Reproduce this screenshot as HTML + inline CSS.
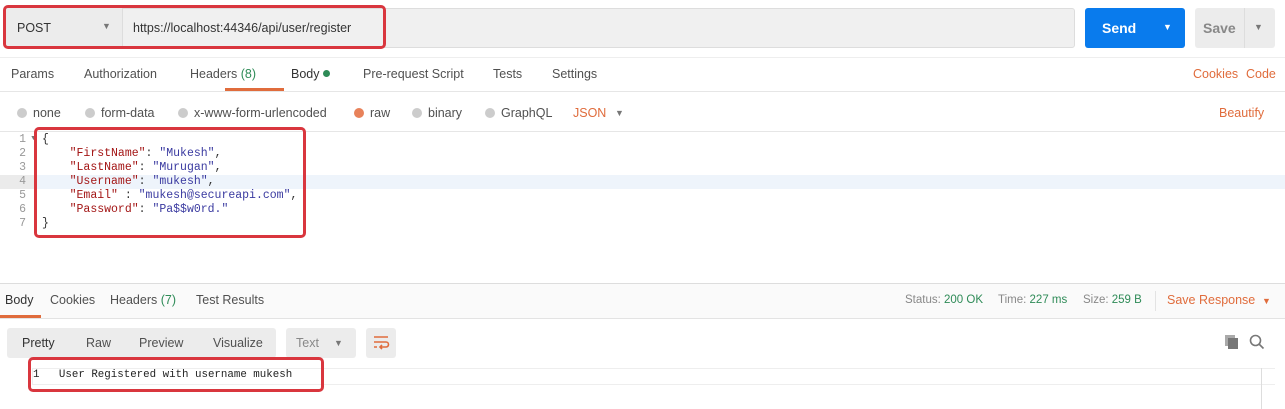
<!DOCTYPE html>
<html><head><style>
body{margin:0;width:1285px;height:409px;background:#fff;font-family:"Liberation Sans",sans-serif;font-size:12px;color:#505050;position:relative;overflow:hidden}
.a{position:absolute;white-space:nowrap}
.red{position:absolute;border:3px solid #d9363e;border-radius:5px;box-sizing:border-box}
.mono{font-family:"Liberation Mono",monospace;font-size:11.5px}
.k{color:#a31515}.s{color:#3a3aa0}
.dot{display:inline-block;width:10px;height:10px;border-radius:50%;background:#ccc;vertical-align:-1px;margin-right:6px}
.g{color:#2e8b57}.o{color:#e06c3c}
</style></head><body>
<div class="a" style="left:4px;top:8px;width:118px;height:40px;background:#ececec;border-radius:3px 0 0 3px"></div>
<div class="a" style="left:17px;top:21px;font-size:12.5px;color:#333">POST</div>
<div class="a" style="left:102px;top:21px;font-size:9px;color:#777">▼</div>
<div class="a" style="left:122px;top:8px;width:953px;height:40px;background:#f0f0f0;border:1px solid #ddd;box-sizing:border-box;border-radius:0 3px 3px 0"></div>
<div class="a" style="left:133px;top:21px;font-size:12.5px;color:#333">https://localhost:44346/api/user/register</div>
<div class="red" style="left:3px;top:5px;width:383px;height:44px"></div>
<div class="a" style="left:1085px;top:8px;width:100px;height:40px;background:#097bed;border-radius:3px"></div>
<div class="a" style="left:1102px;top:20px;font-size:14px;font-weight:bold;color:#fff">Send</div>
<div class="a" style="left:1163px;top:22px;font-size:9px;color:#fff">▼</div>
<div class="a" style="left:1195px;top:8px;width:80px;height:40px;background:#ececec;border-radius:3px"></div>
<div class="a" style="left:1244px;top:8px;width:1px;height:40px;background:#ddd"></div>
<div class="a" style="left:1203px;top:20px;font-size:14px;font-weight:bold;color:#888">Save</div>
<div class="a" style="left:1254px;top:22px;font-size:9px;color:#777">▼</div>
<div class="a" style="left:0;top:57px;width:1285px;height:1px;background:#eee"></div>
<div class="a" style="top:67px;left:11px;font-size:12.5px">Params</div>
<div class="a" style="top:67px;left:84px;font-size:12.5px">Authorization</div>
<div class="a" style="top:67px;left:190px;font-size:12.5px">Headers <span class="g">(8)</span></div>
<div class="a" style="top:67px;left:291px;font-size:12.5px;color:#333">Body <span style="display:inline-block;width:7px;height:7px;border-radius:50%;background:#2e8b57;vertical-align:1px"></span></div>
<div class="a" style="top:67px;left:363px;font-size:12.5px">Pre-request Script</div>
<div class="a" style="top:67px;left:493px;font-size:12.5px">Tests</div>
<div class="a" style="top:67px;left:552px;font-size:12.5px">Settings</div>
<div class="a o" style="top:67px;left:1193px;font-size:12.5px">Cookies</div>
<div class="a o" style="top:67px;left:1246px;font-size:12.5px">Code</div>
<div class="a" style="left:225px;top:88px;width:59px;height:3px;background:#e06c3c"></div>
<div class="a" style="left:0;top:91px;width:1285px;height:1px;background:#e6e6e6"></div>
<div class="a" style="top:106px;left:17px;font-size:12.5px"><span class="dot"></span>none</div>
<div class="a" style="top:106px;left:85px;font-size:12.5px"><span class="dot"></span>form-data</div>
<div class="a" style="top:106px;left:178px;font-size:12.5px"><span class="dot"></span>x-www-form-urlencoded</div>
<div class="a" style="top:106px;left:354px;font-size:12.5px"><span class="dot" style="background:#e8825a"></span>raw</div>
<div class="a" style="top:106px;left:412px;font-size:12.5px"><span class="dot"></span>binary</div>
<div class="a" style="top:106px;left:485px;font-size:12.5px"><span class="dot"></span>GraphQL</div>
<div class="a o" style="top:106px;left:573px;font-size:12.5px">JSON</div>
<div class="a" style="top:108px;left:615px;font-size:9px;color:#777">▼</div>
<div class="a o" style="top:106px;left:1219px;font-size:12.5px">Beautify</div>
<div class="a" style="left:0;top:131px;width:1285px;height:1px;background:#e6e6e6"></div>
<div class="a" style="left:0;top:175px;width:1285px;height:14px;background:#ebebeb"></div>
<div class="a" style="left:34px;top:175px;width:1251px;height:14px;background:#eef4fb"></div>
<div class="a mono" style="left:14px;top:133px;line-height:14px;color:#999;text-align:right;width:12px">1<br>2<br>3<br>4<br>5<br>6<br>7</div>
<div class="a" style="left:30px;top:135px;font-size:7px;color:#777">▼</div>
<div class="a mono" style="left:42px;top:133px;line-height:14px;color:#333;white-space:pre">{
    <span class="k">"FirstName"</span>: <span class="s">"Mukesh"</span>,
    <span class="k">"LastName"</span>: <span class="s">"Murugan"</span>,
    <span class="k">"Username"</span>: <span class="s">"mukesh"</span>,
    <span class="k">"Email"</span> : <span class="s">"mukesh@secureapi.com"</span>,
    <span class="k">"Password"</span>: <span class="s">"Pa$$w0rd."</span>
}</div>
<div class="red" style="left:34px;top:127px;width:272px;height:111px"></div>
<div class="a" style="left:0;top:283px;width:1285px;height:1px;background:#ddd"></div>
<div class="a" style="left:0;top:284px;width:1285px;height:34px;background:#fafafa"></div>
<div class="a" style="top:293px;left:5px;font-size:12.5px;color:#333">Body</div>
<div class="a" style="top:293px;left:50px;font-size:12.5px">Cookies</div>
<div class="a" style="top:293px;left:110px;font-size:12.5px">Headers <span class="g">(7)</span></div>
<div class="a" style="top:293px;left:196px;font-size:12.5px">Test Results</div>
<div class="a" style="left:0;top:315px;width:41px;height:3px;background:#e06c3c"></div>
<div class="a" style="top:294px;left:905px;font-size:11.5px;color:#888">Status: <span class="g">200 OK</span></div>
<div class="a" style="top:294px;left:998px;font-size:11.5px;color:#888">Time: <span class="g">227 ms</span></div>
<div class="a" style="top:294px;left:1083px;font-size:11.5px;color:#888">Size: <span class="g">259 B</span></div>
<div class="a" style="left:1155px;top:291px;width:1px;height:20px;background:#e3e3e3"></div>
<div class="a o" style="top:293px;left:1167px;font-size:12.5px">Save Response</div>
<div class="a o" style="top:296px;left:1262px;font-size:9px">▼</div>
<div class="a" style="left:0;top:318px;width:1285px;height:1px;background:#e3e3e3"></div>
<div class="a" style="left:7px;top:328px;width:269px;height:30px;background:#ececec;border-radius:3px"></div>
<div class="a" style="top:336px;left:22px;font-size:12.5px;color:#333">Pretty</div>
<div class="a" style="top:336px;left:86px;font-size:12.5px">Raw</div>
<div class="a" style="top:336px;left:139px;font-size:12.5px">Preview</div>
<div class="a" style="top:336px;left:213px;font-size:12.5px">Visualize</div>
<div class="a" style="left:286px;top:328px;width:70px;height:30px;background:#ececec;border-radius:3px"></div>
<div class="a" style="top:336px;left:296px;font-size:12.5px;color:#888">Text</div>
<div class="a" style="top:338px;left:334px;font-size:9px;color:#777">▼</div>
<div class="a" style="left:366px;top:328px;width:30px;height:30px;background:#ececec;border-radius:3px"></div>
<svg class="a" style="left:372px;top:334px" width="18" height="18" viewBox="0 0 18 18" fill="none" stroke="#e06c3c" stroke-width="1.6"><path d="M2 3H16M2 8H14a2.5 2.5 0 0 1 0 5H8M10 11l-2 2 2 2M2 13H5"/></svg>
<svg class="a" style="left:1224px;top:334px" width="16" height="16"><rect x="1" y="1" width="10" height="11" fill="#aaa"/><rect x="4" y="4" width="10" height="11" fill="#777"/></svg>
<svg class="a" style="left:1249px;top:334px" width="16" height="16" fill="none" stroke="#777" stroke-width="1.6"><circle cx="6.5" cy="6.5" r="5"/><path d="M10 10l4.5 4.5"/></svg>
<div class="a" style="left:32px;top:368px;width:1242px;height:15px;border:1px solid #eee;border-right:none"></div>
<div class="a" style="left:1261px;top:368px;width:1px;height:41px;background:#ddd"></div>
<div class="a mono" style="left:33px;top:369px;color:#222;font-size:10.8px">1&nbsp;&nbsp;&nbsp;User Registered with username mukesh</div>
<div class="red" style="left:28px;top:357px;width:296px;height:35px"></div>
</body></html>
